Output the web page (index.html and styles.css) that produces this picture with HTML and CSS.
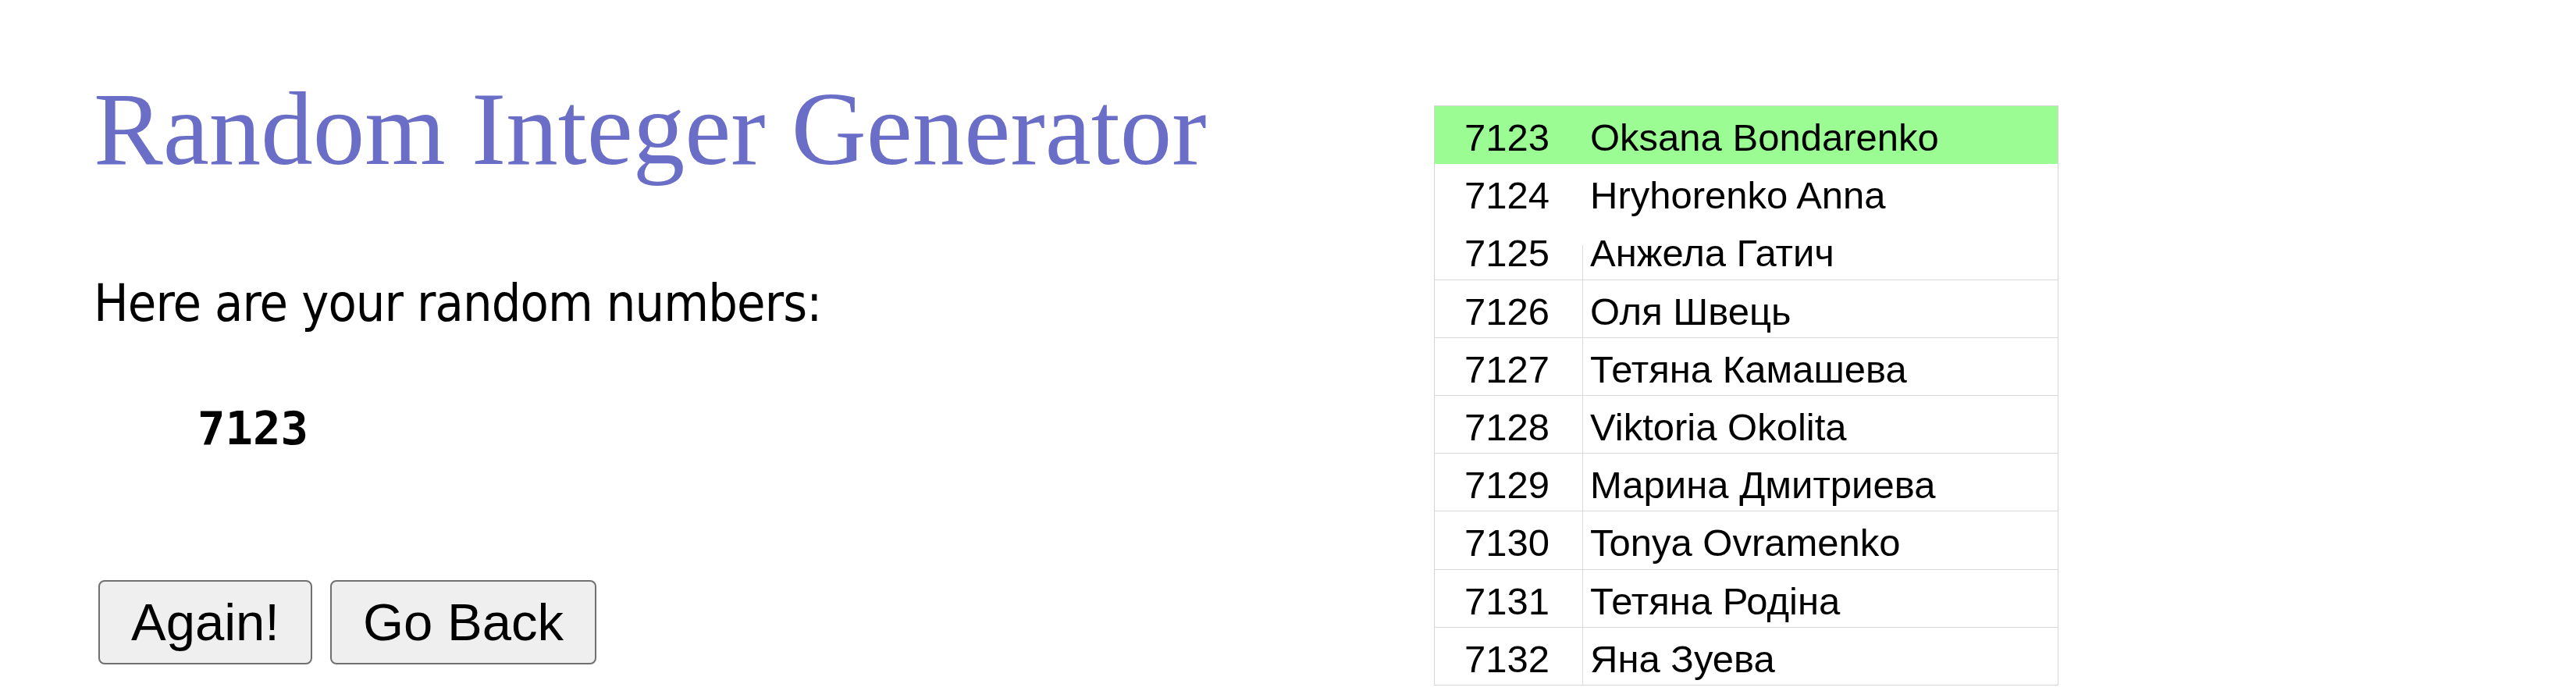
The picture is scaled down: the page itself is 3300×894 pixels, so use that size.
FILE: index.html
```html
<!DOCTYPE html>
<html>
<head>
<meta charset="utf-8">
<link rel="stylesheet" href="styles.css">
</head>
<body>
<div class="page">
  <div class="left">
    <h1 class="title">Random Integer Generator</h1>
    <p class="lead">Here are your random numbers:</p>
    <pre class="result">7123</pre>
    <div class="buttons">
      <button class="btn">Again!</button>
      <button class="btn">Go Back</button>
    </div>
  </div>
  <div class="right">
    <div class="sheet">
      <div class="row hl nolines"><div class="num">7123</div><div class="name">Oksana Bondarenko</div></div>
      <div class="row nolines"><div class="num">7124</div><div class="name">Hryhorenko Anna</div></div>
      <div class="row half"><div class="num">7125</div><div class="name">Анжела Гатич</div></div>
      <div class="row"><div class="num">7126</div><div class="name">Оля Швець</div></div>
      <div class="row"><div class="num">7127</div><div class="name">Тетяна Камашева</div></div>
      <div class="row"><div class="num">7128</div><div class="name">Viktoria Okolita</div></div>
      <div class="row"><div class="num">7129</div><div class="name">Марина Дмитриева</div></div>
      <div class="row"><div class="num">7130</div><div class="name">Tonya Ovramenko</div></div>
      <div class="row"><div class="num">7131</div><div class="name">Тетяна Родіна</div></div>
      <div class="row last"><div class="num">7132</div><div class="name">Яна Зуева</div></div>
    </div>
  </div>
</div>
</body>
</html>
```
FILE: styles.css
```css
html, body {
  margin: 0;
  padding: 0;
  background: #ffffff;
}
.page {
  display: flex;
  width: 3300px;
  height: 894px;
}
.left {
  width: 1717px;
  padding-left: 120px;
  padding-top: 90px;
}
.title {
  margin: 0;
  font-family: "Liberation Serif", serif;
  font-weight: normal;
  font-size: 133px;
  line-height: 150px;
  color: #6a6ec6;
  white-space: nowrap;
}
.lead {
  margin: 109px 0 0 0;
  font-family: "DejaVu Sans Condensed", "DejaVu Sans", sans-serif;
  font-stretch: semi-condensed;
  font-size: 66px;
  line-height: 80px;
  letter-spacing: -0.9px;
  color: #000;
  white-space: nowrap;
}
.result {
  margin: 85px 0 0 133px;
  font-family: "DejaVu Sans Mono", monospace;
  font-weight: bold;
  font-size: 59px;
  line-height: 70px;
  color: #000;
}
.buttons {
  display: flex;
  gap: 23px;
  margin-top: 159px;
  padding-left: 6px;
}
.btn {
  font-family: "Liberation Sans", Arial, sans-serif;
  font-size: 67px;
  line-height: 78px;
  padding: 13px 40px;
  background: #efefef;
  border: 2px solid #707070;
  border-radius: 8px;
  color: #000;
}
.right {
  padding-top: 135px;
}
.sheet {
  width: 798px;
  border: 1px solid #d6d6d6;
  font-family: "Liberation Sans", Arial, sans-serif;
  font-size: 49px;
  color: #000;
}
.row {
  display: grid;
  grid-template-columns: 190px 1fr;
  height: 73.2px;
  border-bottom: 1px solid #dadada;
}
.row.last {
  border-bottom: none;
}
.row.nolines {
  border-bottom: 1px solid transparent;
}
.row.hl {
  background: #9cfc94;
}
.num, .name {
  padding-top: 7px;
  line-height: 66px;
  white-space: nowrap;
}
.num {
  padding-left: 38px;
  border-right: 1px solid #dadada;
}
.name {
  padding-left: 9px;
}
.row.nolines .num {
  border-right-color: transparent;
}
.row.half .num {
  border-right: none;
  background: linear-gradient(to bottom, transparent 0, transparent 40%, #dadada 40%, #dadada 100%) right top / 1px 100% no-repeat;
}
```
